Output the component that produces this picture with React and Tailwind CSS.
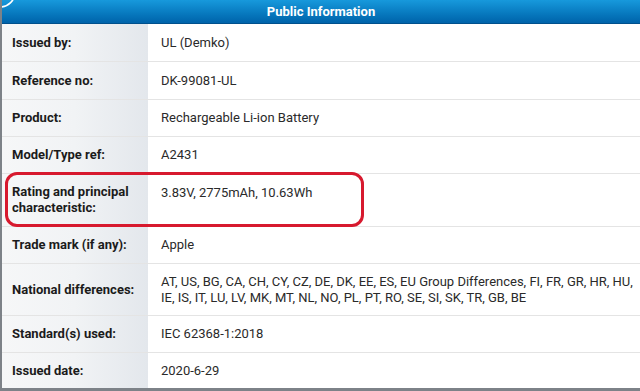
import React from "react";

const rows = [
  { label: "Issued by:", value: "UL (Demko)", h: "h-[38px]" },
  { label: "Reference no:", value: "DK-99081-UL", h: "h-[38px]" },
  { label: "Product:", value: "Rechargeable Li-ion Battery", h: "h-[37px]" },
  { label: "Model/Type ref:", value: "A2431", h: "h-[37px]" },
  {
    label: (
      <>
        Rating and principal
        <br />
        characteristic:
      </>
    ),
    value: "3.83V, 2775mAh, 10.63Wh",
    h: "h-[53px]",
    top: true,
  },
  { label: "Trade mark (if any):", value: "Apple", h: "h-[37px]" },
  {
    label: "National differences:",
    value:
      "AT, US, BG, CA, CH, CY, CZ, DE, DK, EE, ES, EU Group Differences, FI, FR, GR, HR, HU, IE, IS, IT, LU, LV, MK, MT, NL, NO, PL, PT, RO, SE, SI, SK, TR, GB, BE",
    h: "h-[52px]",
  },
  { label: "Standard(s) used:", value: "IEC 62368-1:2018", h: "h-[37px]" },
  { label: "Issued date:", value: "2020-6-29", h: "h-[35px]", last: true },
];

export default function App() {
  return (
    <div
      className="relative w-[640px] h-[391px] overflow-hidden bg-white border-l-2 border-b-[3px] border-[#7d8288]"
      style={{ fontFamily: "Roboto, 'Liberation Sans', sans-serif" }}
    >
      {/* header bar */}
      <div className="relative h-[24px] bg-gradient-to-b from-[#1799dc] to-[#0063aa] border-b border-[#00508c] flex items-center justify-center">
        <span className="text-white font-bold text-[13px] leading-none">Public Information</span>
        <svg className="absolute left-[-2px] top-0" width="22" height="12" viewBox="0 0 22 12">
          <circle cx="0" cy="-8" r="15" fill="none" stroke="#ffffff" strokeWidth="1.6" />
        </svg>
      </div>

      {rows.map((r, i) => (
        <div key={i} className={`flex ${r.h} ${r.last ? "" : "border-b border-[#e4e4e4]"}`}>
          <div className="w-[146px] shrink-0 flex items-center pl-[10px] bg-gradient-to-r from-[#f6f7f8] via-[#f1f3f5] to-[#e3e7ec] text-[13px] leading-[16px] font-bold text-[#1b1b1b]">
            <div>{r.label}</div>
          </div>
          <div className="flex-1 flex items-center pl-[13px] pr-[1px] text-[13px] leading-[16px] text-[#2a2a2a]">
            <div className={r.top ? "self-start pt-[11px]" : ""}>{r.value}</div>
          </div>
        </div>
      ))}

      {/* annotation */}
      <div className="absolute left-[3px] top-[172px] w-[359px] h-[55px] border-[3px] border-[#d7192e] rounded-[12px]" />
    </div>
  );
}
